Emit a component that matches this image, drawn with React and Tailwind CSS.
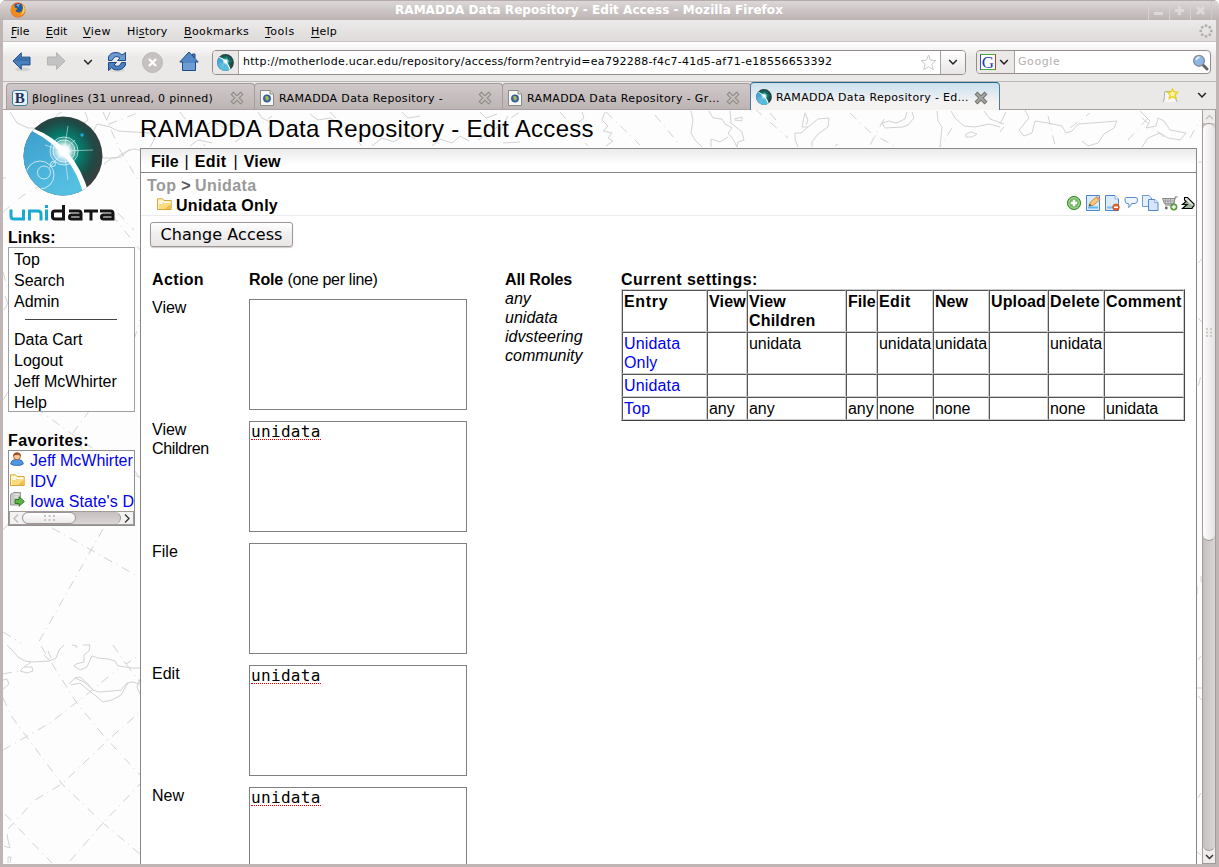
import React from "react";

const UI = "font-['DejaVu_Sans',sans-serif]";

/* ---------- backdrop: faint coastline and graticule map ---------- */

function MapBackdrop() {
  return (
    <svg className="absolute inset-0 pointer-events-none" width="1199" height="754" viewBox="3 110 1199 754" fill="none" stroke="#d2d2d2" strokeWidth="1">
      {/* graticule */}
      <g strokeDasharray="9 5 1 5">
        <path d="M52 528 L139 577 M103 529 L37 645 M3 632 L21 643" />
        <path d="M41 646 L76 702 L103 735 L140 775" />
        <path d="M3 750 L50 723 L86 695 L118 669" />
        <path d="M3 698 L12 717 L26 736 L62 784 L103 823 L140 854" />
        <path d="M8 829 L35 800 L62 784 L107 741 L140 712" />
        <path d="M5 814 L22 832 L52 863 M70 861 L103 823 L140 784" />
        <path d="M3 674 L18 671 M113 645 L126 664 L140 655 M126 664 L140 682" />
        <path d="M103 112 L120 150 L138 180 M3 212 L22 196 L50 180 L95 158" />
        <path d="M8 270 L20 276 M112 215 L140 250" />
        <path d="M36 408 L80 440 L140 478 M90 410 L72 434 L92 462 M134 340 L140 320 M3 272 L8 290 M3 400 L8 392" />
        <path d="M3 530 L8 524" />
        <path d="M118 213 L134 230 M110 112 L104 126 L140 112" />
        <path d="M606 112 L640 145 M655 115 L680 145 M755 109 L788 138 M850 113 L872 134 L895 146 M884 119 L870 145 M952 128 L940 147 M1048 116 L1055 145 M1070 128 L1090 113 M1128 140 L1148 118 M1142 118 L1165 138 M1190 138 L1200 120" />
        <path d="M180 112 L205 146 M235 142 L272 116 M330 112 L362 146 M560 112 L588 146 M478 140 L520 112" />
        <path d="M1198 162 H1202 M1197 688 H1202 M1198 696 L1202 700 M1198 660 L1201 656 M1198 798 L1201 793 M1197 852 L1201 855 M1197 586 V594 M1201 576 V582 M1198 318 L1202 322 M1198 386 L1201 376 M1198 263 L1202 259" />
      </g>
      {/* coastlines in the top band */}
      <path d="M10 112 L17 123 L28 128 L40 128 L50 125 L58 114 L62 112" />
      <path d="M85 112 L88 120 L78 128 L76 133 L84 137 L92 134 L97 124 L110 127 L118 131 L133 132 L150 133 L155 138 L150 147" />
      <path d="M74 152 L82 152 L94 156 L104 158 L116 158 L125 152 L133 149 L140 150 M104 164 L112 158 L121 157 L130 149" />
      <path d="M200 122 L206 126 L212 121 L224 128 L232 123 L240 127 M190 146 L198 140 L212 143 M258 112 L262 118 L272 123 L268 130" />
      <path d="M310 114 L318 120 L330 118 L340 124 M372 146 L382 138 L394 142 L406 134 L415 139 M402 112 L408 118 L420 116" />
      <path d="M432 146 L440 139 L452 143 L460 136 L469 141 M480 112 L486 118 L497 114" />
      <path d="M605 112 L602 120 L608 126 L603 131 L612 133 L608 138 L613 141 L606 146 M582 112 L584 118 L579 122 M503 143 L520 142 M508 116 L500 130" />
      <path d="M691 111 L693 120 L691 133 L695 140 L702 147 M709 111 L713 118 L722 119 L725 124 L732 128 L728 133 L733 139 L737 147 M730 111 L731 123 L742 132 L744 140 L738 142 L737 147 M734 119 L742 117 L742 121 L735 120 M711 147 L711 139 L720 142 L728 137" />
      <path d="M805 113 L802 127 L808 127 L818 119 L829 118 L828 127 L818 134 L812 142 L812 147 M808 127 L801 133 L795 133 L795 139 L798 147 M805 113 L808 120 L806 125" />
      <path d="M912 112 L914 118 L908 125 L903 127 L885 128 L882 123 L889 121 L896 123 L905 119 L907 112" />
      <path d="M951 111 L955 118 L964 126 L975 127 L989 124 L1000 127 M937 111 L938 121 L942 127 L940 147 M966 134 L971 132 L977 134 L972 137 L966 137 Z M984 111 L990 119 L1004 124" />
      <path d="M1025 110 L1029 118 L1019 130 L1024 136 L1032 133 L1035 121 L1048 123 L1062 126 L1066 133 L1072 131 L1078 124 L1105 122 L1117 121 L1114 128 L1104 134 L1098 143 L1088 146 L1082 141" />
      <path d="M1140 111 L1150 121 L1146 128 L1156 126 L1158 118 L1164 121 L1170 130 L1186 133 L1180 140 L1168 138 L1160 133 L1148 138 L1142 147" />
      <path d="M1000 124 L1006 112 M1000 132 L1004 127 M770 113 L776 120 M835 146 L838 144" />
      {/* coastlines in the lower band */}
      <path d="M7 645 L12 650 L18 657 L25 661 L33 662 L49 661 L56 658 L59 650 L64 645 M20 671 L24 667 L32 667 L33 671 L27 673 Z M24 667 L31 662 M44 655 L50 661 M48 651 L51 658" />
      <path d="M72 645 L77 646 L76 648 M83 645 L90 645 L89 651 L84 655 L84 662 L76 664 L74 666 L80 670 L87 667 L92 656 L98 658 L108 659 L115 661 L118 666 L132 668 L140 668" />
      <path d="M69 684 L75 678 L80 677 L88 684 L93 690 L99 692 L112 691 L121 690 L127 683 L133 682 L140 684 M71 685 L80 683 L88 690 L96 696 L103 702 L112 700 L121 695 L125 688 L128 683 M75 678 L84 682 L92 689 M140 679 L137 687 L140 694" />
      <path d="M3 680 L7 679 L9 684 L3 689 M7 834 L8 840 L10 848 L4 846 M8 863 L8 857 L11 857 L10 863" />
      <path d="M3 178 H6 M5 296 L8 303 L4 310 M134 470 L140 478" />
    </svg>
  );
}

/* ---------- icons ---------- */

function Globe({ size = 17 }) {
  return (
    <svg width={size} height={size} viewBox="0 0 80 80" className="shrink-0">
      <defs>
        <radialGradient id="dark" cx="0.5" cy="0.45" r="0.55">
          <stop offset="0" stopColor="#0cb5a0" />
          <stop offset="0.4" stopColor="#067a6c" />
          <stop offset="0.7" stopColor="#1e4a46" />
          <stop offset="0.95" stopColor="#3c3c3c" />
        </radialGradient>
        <linearGradient id="sea" x1="0" y1="0" x2="0.5" y2="1">
          <stop offset="0" stopColor="#3c9ccb" />
          <stop offset="1" stopColor="#55c0e2" />
        </linearGradient>
        <radialGradient id="flare">
          <stop offset="0" stopColor="#fff" />
          <stop offset="0.35" stopColor="#fff" stopOpacity="0.95" />
          <stop offset="1" stopColor="#fff" stopOpacity="0" />
        </radialGradient>
        <clipPath id="disc"><circle cx="40" cy="40" r="39.5" /></clipPath>
      </defs>
      <g clipPath="url(#disc)">
        <rect width="80" height="80" fill="url(#dark)" />
        <path d="M8 12 Q50 28 64 80 L0 80 L0 12 Z" fill="url(#sea)" />
        <path d="M9 12 Q52 28 66 78 L61 80 Q50 36 9 15 Z" fill="#fff" />
        <circle cx="41" cy="35" r="14" fill="url(#flare)" />
        <g fill="none" stroke="#fff" strokeOpacity="0.7">
          <circle cx="41" cy="35" r="14" />
          <circle cx="41" cy="35" r="11" />
          <circle cx="17" cy="59" r="14" />
          <circle cx="21" cy="56.500" r="6.5" />
          <circle cx="30" cy="48" r="2.5" />
          <path d="M45 10 L41 35 L45 64 M22 29 L41 35 L70 34 M26 52 L41 35 L52 24" strokeOpacity="0.5" />
        </g>
        <circle cx="59" cy="19" r="1.7" fill="#20a8d8" />
      </g>
    </svg>
  );
}

function Firefox() {
  return (
    <svg width="16" height="16" viewBox="0 0 16 16" className="-mt-0.5">
      <circle cx="8" cy="8" r="7.4" fill="#d9541a" />
      <circle cx="8.3" cy="6.8" r="5.2" fill="#1f5a9d" />
      <path d="M6 3 Q8 1.5 10 2 Q8 4 9 5.5 Z" fill="#6eb4e0" />
      <path d="M1 5 Q3.5 2 5 3.5 Q3.6 5.5 6.5 6 L7.5 7.5 L5.5 8 Q6 11 9.5 10.5 Q13 9.5 13.2 5 L12 2 Q16 5 15 9.5 Q13 15.3 7.5 15 Q1.5 14.5 0.8 9 Z" fill="#f08a1c" />
      <path d="M12.5 2.5 Q15.8 6 14.4 9.8 Q13 13 10 13.5 Q14 10 12.5 2.5" fill="#fbd34a" />
    </svg>
  );
}

const Chevron = ({ color = "#222" }) => (
  <svg width="10" height="7" viewBox="0 0 10 7" fill="none" stroke={color} strokeWidth="1.5"><path d="M1.2 1 L5 5 L8.8 1" /></svg>
);

function BackArrow() {
  return (
    <svg width="20" height="22" viewBox="0 0 20 22">
      <ellipse cx="11" cy="18.5" rx="8" ry="2" fill="#d4d4d4" />
      <path d="M1 10 L9.5 1.5 V6 H18.5 V14 H9.5 V18.5 Z" fill="#4a80bd" stroke="#1e4a85" />
      <path d="M2.8 10 L8.5 4.2 V7 H17.5 V10 Z" fill="#3a6ead" />
    </svg>
  );
}

function ForwardArrow() {
  return (
    <svg width="20" height="22" viewBox="0 0 20 22">
      <path d="M19 10 L10.5 1.5 V6 H1.5 V14 H10.5 V18.5 Z" fill="#c3c3c3" stroke="#b4b4b4" />
    </svg>
  );
}

function Reload() {
  return (
    <svg width="20" height="22" viewBox="0 0 20 22">
      <ellipse cx="10" cy="19" rx="8" ry="2" fill="#d8d8d8" />
      <path d="M1.5 9.5 V6 Q3 1.5 9 1.5 Q13 1.5 15 4 L18.5 1.5 V9.5 H10.5 L13 7 Q8 3 5 9.5 Z" fill="#6b9bd0" stroke="#1e4a85" />
      <path d="M18.5 11.5 V14 Q16 19 10 19 Q6.5 19 4.7 16.7 L1.5 19.5 V11.5 H9.5 L7 14 Q12 17.5 14.5 11.5 Z" fill="#4a80bd" stroke="#1e4a85" />
    </svg>
  );
}

function Home() {
  return (
    <svg width="20" height="22" viewBox="0 0 20 22">
      <path d="M13.5 3 H16 V7 L13.5 5 Z" fill="#4a80bd" stroke="#1e4a85" />
      <path d="M10 1 L0.8 11 H3.5 V19.5 H16.5 V11 H19.2 Z" fill="#5288c4" stroke="#1e4a85" />
      <path d="M4 12 H16 V19 H4 Z" fill="#6b9cd2" />
    </svg>
  );
}

const CloseX = ({ dark }) => (
  <svg width="14" height="14" viewBox="0 0 14 14" className="mt-[3px] shrink-0">
    <path d="M2 2 L12 12 M12 2 L2 12" stroke={dark ? "#6a6b65" : "#85837d"} strokeWidth="4" />
    <path d="M2.6 2.6 L11.4 11.4 M11.4 2.6 L2.6 11.4" stroke={dark ? "#a2a49e" : "#c2bcb9"} strokeWidth="2.2" />
  </svg>
);

const PageIcon = () => (
  <svg width="14" height="16" viewBox="0 0 14 16" className="mr-px mt-[3px] shrink-0">
    <path d="M0.5 0.5 H10 L13.5 4 V15.5 H0.5 Z" fill="#f7f7f5" stroke="#8b8b86" />
    <path d="M10 0.5 V4 H13.5" fill="#ddd" stroke="#8b8b86" />
    <circle cx="7" cy="8.5" r="3.7" fill="#3567a8" stroke="#254c80" strokeWidth=".6" />
    <path d="M5 6.5 L8 6 L9 9 L7 11 L5.5 9 Z" fill="#a9b84a" />
  </svg>
);

const BIcon = () => (
  <span className="mt-[3px] flex h-4 w-4 shrink-0 items-center justify-center rounded-[3px] border border-[#3f7d9c] bg-[#e8f1f6] font-['Liberation_Serif',serif] text-[15px] font-bold leading-none text-[#20305c]">B</span>
);

const Folder = () => (
  <svg width="15" height="12" viewBox="0 0 15 12" className="-mt-[3px] shrink-0">
    <path d="M0.5 11.5 V0.8 H5.5 L7 2.5 H14.2 V11.5 Z" fill="#fdf3c0" stroke="#d9a63f" />
    <path d="M2 11 V5 H6 L7 4 H13.6 V11 Z" fill="#f9dc7c" />
    <path d="M2.500 3.500 H6 M2.500 5.500 H5.500 L7 4.500 H13" stroke="#fff" />
    <path d="M8 11 H13.7 V6 Z" fill="#f0bd40" />
  </svg>
);

const Person = () => (
  <svg width="14" height="14" viewBox="0 0 14 14">
    <path d="M0.6 12 Q1 8 5 7.5 H9 Q13 8 13.4 12 Q10 14 7 13.4 Q4 14 0.6 12" fill="#4f97e0" stroke="#2c62a8" strokeWidth=".8" />
    <circle cx="7" cy="4.3" r="3.5" fill="#f5c79b" stroke="#8a4a20" strokeWidth=".7" />
    <path d="M3.2 4.5 Q2.8 0.4 7 0.4 Q11.2 0.4 10.8 4.5 Q9 2.8 7 3.2 Q5 2.8 3.2 4.5" fill="#9b5327" />
  </svg>
);

const ServerGo = () => (
  <svg width="15" height="15" viewBox="0 0 15 15">
    <path d="M0.5 2.5 L4 0.5 H10.5 V10 L8 13 H0.5 Z" fill="#c9c9c9" stroke="#979797" />
    <path d="M4.5 2.5 H9 M4.5 5 H9" stroke="#eee" />
    <path d="M5 7.5 H9 V4.7 L14.4 9.5 L9 14.3 V11.5 H5 Z" fill="#5cb445" stroke="#2f7d22" />
  </svg>
);

function EntryIcons() {
  return (
    <div className="flex items-center gap-[3px]">
      <svg width="16" height="16" viewBox="0 0 16 16"><circle cx="8" cy="8" r="6.6" fill="#6fb85c" stroke="#3c8a35" /><circle cx="8" cy="8" r="5.2" fill="none" stroke="#b9e0ae" strokeWidth=".8" /><path d="M8 4.8 V11.2 M4.8 8 H11.2" stroke="#fff" strokeWidth="2.4" /></svg>
      <svg width="16" height="16" viewBox="0 0 16 16"><path d="M1.5 .5 H14.5 V15.5 H1.5 Z" fill="#dcebfb" stroke="#4b84c8" /><path d="M3 12.5 H13" stroke="#5fb5f0" strokeWidth="2" /><path d="M4 11 L5 7.5 L12 1.5 L15 4.5 L8 10.5 Z" fill="#f8c878" stroke="#b98236" strokeWidth=".8" /><path d="M4 11 L4.7 8.8 L6.5 10.4 Z" fill="#333" /><path d="M12 1.5 L15 4.5 L13.5 5.6 L10.8 2.7Z" fill="#e9957c" /></svg>
      <svg width="16" height="16" viewBox="0 0 16 16"><path d="M1.5 .5 H11 L14.5 4 V15.5 H1.5 Z" fill="#dcebfb" stroke="#4b84c8" /><path d="M11 .5 V4 H14.5" fill="#fff" stroke="#8ab2e0" /><path d="M3 12.5 H10" stroke="#7bc0f0" strokeWidth="2" /><circle cx="12" cy="12.2" r="3.3" fill="#e8622a" stroke="#b9431a" strokeWidth=".6" /><path d="M10 12.2 H14" stroke="#fff" strokeWidth="1.4" /></svg>
      <svg width="16" height="16" viewBox="0 0 16 16"><path d="M3 2.5 H13 Q14.5 2.5 14.5 5 Q14.5 8.5 12 8.5 H8.5 Q8.5 11 5.5 12.5 Q6.5 10 5.5 8.5 H4 Q2 8.5 2 5 Q2 2.5 3 2.5" fill="#eef5fd" stroke="#5f8fc9" /></svg>
      <svg width="17" height="16" viewBox="0 0 17 16"><path d="M.5 .5 H7 L9.5 3 V11.5 H.5 Z" fill="#e4effc" stroke="#6f9bd3" /><path d="M6.5 4.5 H13 L16 7.5 V15.5 H6.5 Z" fill="#d6e6fa" stroke="#5687c8" /><path d="M12.7 4.5 V7.7 H16" fill="#fff" stroke="#7ba5da" /></svg>
      <svg width="16" height="16" viewBox="0 0 16 16"><path d="M15.5 2 H13.3 L11.5 10 H3" fill="none" stroke="#777" strokeWidth="1.1" /><path d="M0.5 3.5 H12.8 L11.7 8.8 H2.5 Z" fill="#cfcfcf" stroke="#8a8a8a" /><path d="M3.5 4 V8.5 M6 4 V8.5 M8.5 4 V8.5 M1 6 H12" stroke="#8f8f8f" strokeWidth=".7" /><circle cx="4.3" cy="13" r="1.4" fill="#666" /><circle cx="11.8" cy="12" r="3.3" fill="#6aa84f" stroke="#3d7a2c" strokeWidth=".6" /><path d="M11.8 10 V14 M9.8 12 H13.8" stroke="#fff" strokeWidth="1.3" /></svg>
      <svg width="14" height="16" viewBox="0 0 14 16"><path d="M3.500 2.500 L6.500 2.500 L13 9 V11 L10.500 12 L3.500 5 Z" fill="#dfe8da" stroke="#000" strokeWidth="1.1" /><path d="M5 6.500 L1.500 9.500 H6 L1.500 13.500 H11 L12.5 11" fill="#9fb39f" stroke="#000" strokeWidth="1.2" /></svg>
    </div>
  );
}

/* ---------- browser chrome ---------- */

function TitleBar() {
  return (
    <div className="relative flex h-5 shrink-0 items-center border-t border-[#b5abab] bg-linear-to-b from-[#dcd7d7] to-[#bdb3b3] pl-2.5">
      <Firefox />
      <div className="absolute inset-x-0 top-0 pl-[395px] text-[12px] font-bold leading-[18px] tracking-[0.05px] text-white whitespace-nowrap">RAMADDA Data Repository - Edit Access - Mozilla Firefox</div>
      <div className="ml-auto mr-[7px] flex h-full">
        {["M4 12.5 H13", "M4 9.5 H13 M8.5 5 V14", "M5 6 L12 13 M12 6 L5 13"].map((d) => (
          <div key={d} className="w-[21px] border-l border-[#d6d0d0]">
            <svg width="18" height="18" viewBox="-1 0 18 18"><path d={d} stroke="#dfdada" strokeWidth="3" fill="none" /></svg>
          </div>
        ))}
        <div className="w-px bg-[#cfc8c8]" />
      </div>
    </div>
  );
}

function MenuItem({ pre = "", hot, post, cls }) {
  return <span className={"shrink-0 pt-[3px] whitespace-nowrap " + cls}>{pre}<span className="underline underline-offset-2">{hot}</span>{post}</span>;
}

function MenuBar() {
  return (
    <div className="flex h-[22px] shrink-0 items-center border-b border-[#c9c4c4] bg-linear-to-b from-[#eceaea] to-[#dfdbdb] pl-2 pr-[3px] text-[11px] text-black">
      <MenuItem hot="F" post="ile" cls="w-[35px]" />
      <MenuItem hot="E" post="dit" cls="w-[37px]" />
      <MenuItem hot="V" post="iew" cls="w-[44px] tracking-[0.45px]" />
      <MenuItem pre="Hi" hot="s" post="tory" cls="w-[57px] tracking-[0.2px]" />
      <MenuItem hot="B" post="ookmarks" cls="w-[81px] tracking-[0.42px]" />
      <MenuItem hot="T" post="ools" cls="w-[46px] tracking-[0.5px]" />
      <MenuItem hot="H" post="elp" cls="w-10 tracking-[0.2px]" />
      <svg className="ml-auto" width="14" height="14" viewBox="-7 -7 14 14">
        {[0, 45, 90, 135, 180, 225, 270, 315].map((a) => (
          <rect key={a} x="-1.2" y="-6.6" width="2.4" height="2.6" fill="#b3aeae" transform={`rotate(${a})`} />
        ))}
      </svg>
    </div>
  );
}

function Toolbar() {
  return (
    <div className="flex h-10 shrink-0 items-center border-b border-[#bdb8b8] bg-linear-to-b from-white to-[#ebe9e8] to-40% pl-[9px] pr-[5px] pt-px">
      <BackArrow />
      <div className="ml-[15px]"><ForwardArrow /></div>
      <div className="ml-[17px]"><Chevron /></div>
      <div className="ml-[14px] mr-[15px]"><Reload /></div>
      <div className="flex h-[21px] w-[21px] items-center justify-center rounded-full border border-[#bcb6b6] bg-[#c6c1c1]">
        <svg width="9" height="9" viewBox="0 0 9 9"><path d="M1 1 L8 8 M8 1 L1 8" stroke="#fff" strokeWidth="2.3" /></svg>
      </div>
      <div className="ml-[16px]"><Home /></div>

      <div className="ml-[13px] flex h-[25px] w-[754px] shrink-0 overflow-hidden rounded-[4px] border border-[#968c8c] bg-white">
        <div className="flex w-[26px] items-center justify-center border-r border-[#a9a0a0] bg-[#ebe8e8]"><Globe size={17} /></div>
        <div className="flex flex-1 items-center pl-1 pt-px text-[11px] tracking-[0.275px] text-black whitespace-nowrap">http://motherlode.ucar.edu/repository/access/form?entryid=ea792288-f4c7-41d5-af71-e18556653392</div>
        <svg className="mr-[3px] mt-[3px]" width="17" height="17" viewBox="0 0 17 17"><path d="M8.5 1 L10.6 6.2 L16 6.6 L11.9 10.2 L13.2 15.7 L8.5 12.7 L3.8 15.7 L5.1 10.2 L1 6.6 L6.4 6.2 Z" fill="#fff" stroke="#c9c9c9" /></svg>
        <div className="flex w-[25px] items-center justify-center border-l border-[#a9a0a0] bg-linear-to-b from-white to-[#e8e5e5]"><Chevron /></div>
      </div>

      <div className="ml-2.5 flex h-[24px] w-[235px] shrink-0 overflow-hidden rounded-[4px] border border-[#968c8c] bg-white">
        <div className="flex w-[38px] items-center border-r border-[#a9a0a0] bg-[#ebe8e8] pl-[3px]">
          <span className="flex h-4 w-4 items-center justify-center border border-b-[#3fae3a] border-l-[#2f57b8] border-r-[#d03020] border-t-[#3fae3a] bg-white font-['Liberation_Serif',serif] text-[17px] leading-none text-[#1b3fae]">G</span>
          <span className="ml-[3px]"><Chevron /></span>
        </div>
        <div className="flex flex-1 items-center pl-[3px] pt-px text-[11px] tracking-[0.6px] text-[#b5b0b0]">Google</div>
        <svg className="mr-px mt-[3px]" width="17" height="17" viewBox="0 0 17 17">
          <path d="M10 10 L15 15" stroke="#666" strokeWidth="3" strokeLinecap="round" />
          <circle cx="7" cy="6.8" r="5.4" fill="#8db7e8" stroke="#8a8f94" strokeWidth="1.4" />
          <path d="M4 6 Q4.8 3.4 7.6 3.2" stroke="#e8f2fc" strokeWidth="1.6" fill="none" />
        </svg>
      </div>
    </div>
  );
}

function Tab({ icon, children, cls }) {
  return (
    <div className={"flex h-[26px] shrink-0 items-center self-end rounded-t-[4px] border border-b-0 border-[#a59b9b] bg-linear-to-b from-[#d0c9c9] to-[#bdb4b4] pl-[5px] pr-[10px] " + cls}>
      {icon}
      <span className="ml-1 flex-1 pt-[5px] whitespace-nowrap">{children}</span>
      <CloseX />
    </div>
  );
}

function TabBar() {
  return (
    <div className="flex h-7 shrink-0 border-b border-[#a8a0a0] bg-[#ebe9e8] pl-[3px] text-[11px] text-black">
      <Tab cls="w-[249px] tracking-[0.262px]" icon={<BIcon />}>βloglines (31 unread, 0 pinned)</Tab>
      <Tab cls="-ml-px w-[249px] tracking-[0.35px]" icon={<PageIcon />}>RAMADDA Data Repository -</Tab>
      <Tab cls="-ml-px w-[249px] tracking-[0.35px]" icon={<PageIcon />}>RAMADDA Data Repository - Gr…</Tab>
      <div className="-mb-px -ml-px flex h-7 w-[250px] shrink-0 items-center self-end rounded-t-[4px] border border-b-0 border-[#4a7b9a] border-t-[#1f6489] bg-linear-to-b from-[#c9e0ee] to-[#f5f2f2] to-70% pl-[5px] pr-[11px] tracking-[0.32px]">
        <span className="mt-px"><Globe size={16} /></span>
        <span className="ml-[4px] flex-1 pt-1 whitespace-nowrap">RAMADDA Data Repository - Ed…</span>
        <CloseX dark />
      </div>
      <div className="ml-auto flex items-center pr-[9px]">
        <svg width="17" height="15" viewBox="0 0 17 15" className="mr-[18px]">
          <path d="M1 14 Q2.5 13 2.5 5 Q2.5 3.5 4 3.5 H12 Q13.5 3.5 13.5 5 Q13.5 13 15.5 14" fill="#f7f6f6" stroke="#aaa" />
          <path d="M10.5 1 L12 4 L15.5 4.3 L13 6.8 L13.8 10.4 L10.5 8.6 L7.2 10.4 L8 6.8 L5.5 4.3 L9 4 Z" fill="#fff8a8" stroke="#e8d21d" strokeWidth="1.3" />
        </svg>
        <Chevron />
      </div>
    </div>
  );
}

/* ---------- page ---------- */

const Link = ({ children }) => <span className="block h-[21px] pl-[5px] leading-[21px] whitespace-nowrap">{children}</span>;

function Sidebar() {
  return (
    <div className="flex w-[137px] shrink-0 flex-col pl-[5px]">
      <div className="ml-[15px] mt-[6px]"><Globe size={80} /></div>
      <svg className="ml-px mt-[9px]" width="107" height="17" viewBox="0 0 107 17" fill="none" strokeWidth="3">
        <g stroke="#1ba8d2">
          <path d="M2 4.5 V11 Q2 14 5 14 H14.5 V4.5" />
          <path d="M20.500 15.500 V6 H29 Q32 6 32 9 V15.500" />
          <path d="M37.500 4.5 V15.500 M37.500 0 V3" />
        </g>
        <g stroke="#151515">
          <path d="M54.500 0 V14 H46 Q43.500 14 43.500 11.500 V8.500 Q43.500 6 46 6 H54.500" />
          <path d="M60 6 H69.500 Q72 6 72 8.500 V14 H62.500 Q60.500 14 60.500 12 Q60.500 10 62.500 10 H72" />
          <path d="M75 6 H89 M82 6 V15.500" />
          <path d="M91 6 H101.500 Q104 6 104 8.500 V14 H94.500 Q92.500 14 92.500 12 Q92.500 10 94.500 10 H104" />
        </g>
      </svg>
      <div className="mt-[7px] h-[18px] font-bold leading-[18px] tracking-[0.1px]">Links:</div>
      <div className="flex h-[165px] w-[127px] flex-col border border-[#a0a0a0] bg-white pt-px">
        <Link>Top</Link>
        <Link>Search</Link>
        <Link>Admin</Link>
        <div className="ml-4 mb-[9px] mt-[7px] h-px w-[92px] shrink-0 bg-[#444]" />
        <Link>Data Cart</Link>
        <Link>Logout</Link>
        <Link>Jeff McWhirter</Link>
        <Link>Help</Link>
      </div>
      <div className="mt-[19px] h-[19px] font-bold leading-[19px] tracking-[0.45px]">Favorites:</div>
      <div className="flex h-[76px] w-[127px] flex-col overflow-hidden border border-[#8f8f8f] bg-white text-[#0000ee] whitespace-nowrap">
        <div className="flex h-5 shrink-0 items-center gap-[6px] pl-px"><span className="-mt-1 w-[14px]"><Person /></span><span>Jeff McWhirter</span></div>
        <div className="flex h-5 shrink-0 items-center gap-[5px] pl-px pt-px"><Folder /><span>IDV</span></div>
        <div className="flex h-5 shrink-0 items-center gap-[5px] pl-px pt-px"><span className="-mt-1 w-[15px] shrink-0"><ServerGo /></span><span className="tracking-[0.1px]">Iowa State's D</span></div>
        <div className="flex h-[14px] shrink-0 items-center border border-[#a39a9a] bg-[#f3f1f1]">
          <div className="flex w-[12px] justify-center"><svg width="6" height="9" viewBox="0 0 6 9"><path d="M5 .5 L1 4.500 L5 8.500" fill="none" stroke="#bbb" strokeWidth="1.2" /></svg></div>
          <div className="flex h-full w-[99px] rounded-full border-r border-[#9f9696] bg-linear-to-b from-[#c6bfbf] to-[#dbd7d7]">
            <div className="flex h-full w-[54px] items-center justify-center rounded-full border border-[#9f9696] bg-linear-to-b from-white to-[#ece9e9]">
              <svg width="11" height="6" viewBox="0 0 11 6" fill="#c9c3c3"><path d="M0 0h2v2h-2z M4.500 0h2v2h-2z M9 0h2v2h-2z M0 4h2v2h-2z M4.500 4h2v2h-2z M9 4h2v2h-2z" /></svg>
            </div>
          </div>
          <div className="flex flex-1 justify-center"><svg width="6" height="9" viewBox="0 0 6 9"><path d="M1 .5 L5 4.500 L1 8.500" fill="none" stroke="#333" strokeWidth="1.3" /></svg></div>
        </div>
      </div>
    </div>
  );
}

const ACTIONS = [
  ["View", ""],
  ["View Children", "unidata"],
  ["File", ""],
  ["Edit", "unidata"],
  ["New", "unidata"],
];

const HEADS = [
  ["Entry", "tracking-[0.7px]"],
  ["View", "tracking-[0.2px]"],
  ["View Children", "tracking-[0.2px]"],
  ["File", ""],
  ["Edit", "tracking-[0.4px]"],
  ["New", ""],
  ["Upload", "tracking-[0.13px]"],
  ["Delete", "tracking-[0.35px]"],
  ["Comment", "tracking-[0.25px]"],
];

const ROWS = [
  ["Unidata Only", "", "unidata", "", "unidata", "unidata", "", "unidata", ""],
  ["Unidata", "", "", "", "", "", "", "", ""],
  ["Top", "any", "any", "any", "none", "none", "", "none", "unidata"],
];

const CELL = "border border-t-[#555] border-l-[#555] border-b-[#ccc] border-r-[#ccc] p-px leading-[19px] ";

function Settings() {
  return (
    <div className="w-[564px]">
      <div className="h-[19px] font-bold tracking-[0.47px] whitespace-nowrap">Current settings:</div>
      <div className="grid grid-cols-[85px_40px_99px_31px_56px_56px_59px_56px_80px] grid-rows-[42px_42px_23px_23px] border border-b-[#444] border-l-[#ccc] border-r-[#444] border-t-[#ccc]">
        {HEADS.map(([h, t]) => (
          <div key={h} className={CELL + "font-bold " + t}><div className={h === "View Children" ? "w-[70px]" : "whitespace-nowrap"}>{h}</div></div>
        ))}
        {ROWS.map((r) =>
          r.map((v, i) => (
            <div key={r[0] + i} className={CELL + (i === 0 ? "text-[#0000ee]" : "")}><div className={i === 0 ? "w-[62px] tracking-[0.15px]" : "tracking-[-0.05px]"}>{v}</div></div>
          ))
        )}
      </div>
    </div>
  );
}

function Panel() {
  return (
    <div className="flex flex-1 flex-col overflow-hidden border border-b-0 border-[#888] bg-white">
      <div className="flex h-6 shrink-0 items-center gap-[6px] border-b border-[#888] bg-linear-to-b from-[#ebebeb] to-white to-70% pl-[10px] pt-[2px] font-bold">
        <span>File</span><span className="font-normal">|</span><span className="mr-px tracking-[0.4px]">Edit</span><span className="font-normal">|</span><span className="tracking-[0.2px]">View</span>
      </div>
      <div className="flex h-[43px] shrink-0 items-end justify-between border-b border-[#ececec]">
        <div className="flex h-full flex-col">
          <div className="h-[20px] pl-[6px] pt-[3px] font-bold leading-[20px] text-[#999] tracking-[0.4px] whitespace-nowrap">Top <span className="text-[#555] tracking-[-0.3px]">&gt;</span> Unidata</div>
          <div className="flex items-center pl-4 pt-[2px]"><Folder /><span className="ml-1 pt-px font-bold leading-[20px] tracking-[0.28px]">Unidata Only</span></div>
        </div>
        <div className="pb-1 pr-px"><EntryIcons /></div>
      </div>
      <div className={"ml-[9px] mt-[6px] flex h-[25px] w-[143px] shrink-0 items-center justify-center rounded-[3px] border border-[#9f9696] bg-linear-to-b from-white via-[#f0eeee] to-[#e9e6e6] text-[16px] tracking-[0.07px] shadow-[0_1px_1px_#d0cccc] " + UI}>Change Access</div>

      <div className="mt-[23px] flex pl-[11px] leading-[19px]">
        <div className="grid shrink-0 grid-cols-[97px_256px] auto-rows-[122px] grid-rows-[24px] content-start">
          <div className="font-bold tracking-[0.37px]">Action</div>
          <div><b className="tracking-[-0.15px]">Role</b> <span className="tracking-[-0.3px]">(one per line)</span></div>
          {ACTIONS.map(([a, v]) => (
            <React.Fragment key={a}>
              <div className="w-[70px] pt-1">{a === "View Children" ? <>View <span className="tracking-[-0.35px]">Children</span></> : a}</div>
              <div className="pt-[5px]">
                <div className="h-[111px] w-[218px] border border-[#808080] bg-white pl-px pt-px font-['DejaVu_Sans_Mono',monospace] text-[16px] leading-[18px] tracking-[0.33px]">
                  {v && <span className="inline-block h-[17px] border-b border-dotted border-[#e00000]">{v}</span>}
                </div>
              </div>
            </React.Fragment>
          ))}
        </div>
        <div className="w-[116px] shrink-0">
          <div className="font-bold tracking-[-0.15px]">All Roles</div>
          <div className="italic tracking-[0.03px]">any<br />unidata<br />idvsteering<br />community</div>
        </div>
        <Settings />
      </div>
    </div>
  );
}

function Scrollbar() {
  return (
    <div className="flex w-[14px] shrink-0 flex-col border-x border-[#a39a9a] bg-[#efedec]">
      <div className="flex h-[13px] items-center justify-center"><svg width="9" height="6" viewBox="0 0 9 6"><path d="M1 5 L4.500 1.500 L8 5" fill="none" stroke="#bbb" strokeWidth="1.2" /></svg></div>
      <div className="flex flex-1 flex-col rounded-b-[7px] border-b border-[#a39a9a] bg-linear-to-r from-[#c6bfbf] to-[#dad6d6]">
        <div className="flex h-[418px] items-center justify-center rounded-[7px] border-y border-[#9f9696] bg-linear-to-r from-[#fdfdfd] to-[#e6e3e3]">
          <svg width="6" height="9" viewBox="0 0 6 9" fill="#cfcaca"><path d="M0 0h2v2h-2z M4 0h2v2h-2z M0 3.500h2v2h-2z M4 3.500h2v2h-2z M0 7h2v2h-2z M4 7h2v2h-2z" /></svg>
        </div>
      </div>
      <div className="flex h-[13px] items-center justify-center border-b border-[#a39a9a]"><svg width="9" height="6" viewBox="0 0 9 6"><path d="M1 1 L4.500 4.500 L8 1" fill="none" stroke="#333" strokeWidth="1.5" /></svg></div>
    </div>
  );
}

export default function App() {
  return (
    <div className={"flex h-[867px] w-[1219px] flex-col overflow-hidden rounded-t-[6px] bg-[#bfb5b5] " + UI}>
      <TitleBar />
      <div className="mx-[3px] mb-[3px] flex flex-1 flex-col overflow-hidden">
        <MenuBar />
        <Toolbar />
        <TabBar />
        <div className="relative flex flex-1 overflow-hidden bg-[#fdfdfd] font-['Liberation_Sans',sans-serif] text-[16px] text-black">
          <MapBackdrop />
          <div className="relative flex flex-1">
            <Sidebar />
            <div className="flex w-[1057px] flex-col">
              <div className="h-[38px] shrink-0 text-[24px] leading-[38px] tracking-[0.3px] whitespace-nowrap">RAMADDA Data Repository - Edit Access</div>
              <Panel />
            </div>
          </div>
          <div className="relative flex"><Scrollbar /></div>
        </div>
      </div>
    </div>
  );
}
